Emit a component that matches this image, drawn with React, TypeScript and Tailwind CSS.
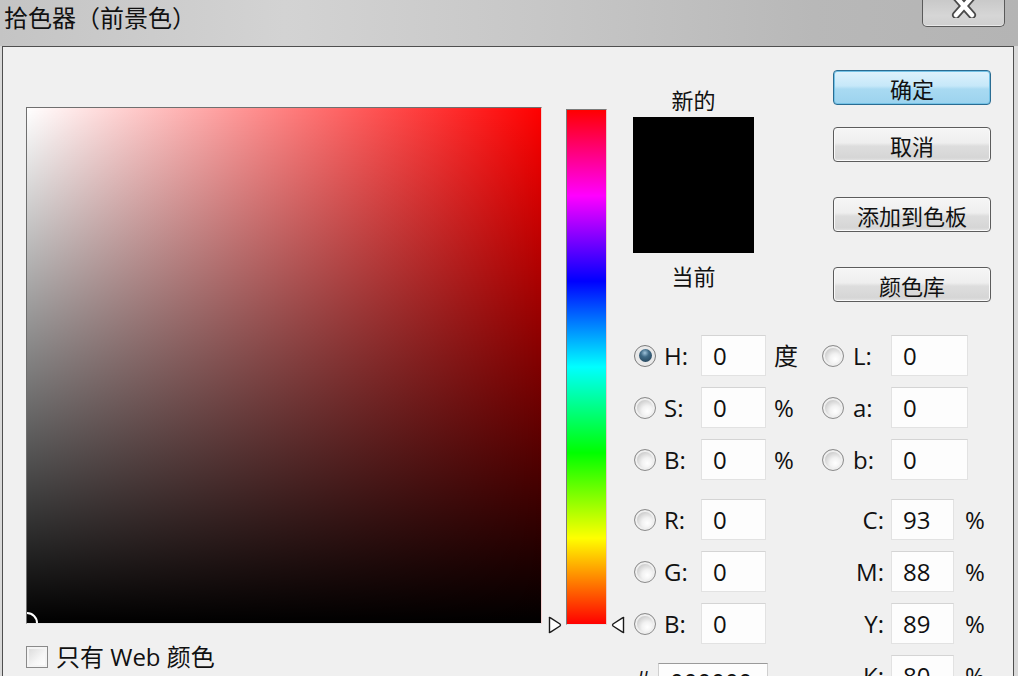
import React from "react";

const radioOff =
  "w-[22px] h-[22px] rounded-full border border-[#8c8c8c] bg-[radial-gradient(circle_at_62%_66%,#ffffff_0%,#f2f2f2_30%,#d2d2d2_60%,#b6b6b6_100%)] shadow-[inset_0_0_0_2px_#efefef] shrink-0";

function Radio({ on }: { on?: boolean }) {
  if (on) {
    return (
      <div className="w-[22px] h-[22px] rounded-full border border-[#7c7c7c] bg-[#e9e9e9] flex items-center justify-center shrink-0">
        <div className="w-[13px] h-[13px] rounded-full bg-[radial-gradient(circle_at_45%_30%,#9fc3da_0%,#3f6a86_35%,#1e3b50_100%)]" />
      </div>
    );
  }
  return <div className={radioOff} />;
}

function Field({ value, w }: { value: string; w: string }) {
  return (
    <div
      className={`${w} h-[41px] bg-[#fdfdfd] border border-[#e2e2e2] border-t-[#d4d4d4] flex items-center pl-[11px] text-[24px] leading-none text-[#111]`}
    >
      {value}
    </div>
  );
}

function LeftRow({ label, value, unit, mt, on }: { label: string; value: string; unit?: string; mt: string; on?: boolean }) {
  return (
    <div className={`flex items-center h-[41px] ${mt}`}>
      <div className="ml-[1px]">
        <Radio on={on} />
      </div>
      <span className="ml-[8px] w-[37px] text-[24px] leading-none text-[#111]">{label}</span>
      <Field value={value} w="w-[65px]" />
      {unit && <span className="ml-[8px] text-[24px] leading-none text-[#111]">{unit}</span>}
    </div>
  );
}

function LabRow({ label, value, mt }: { label: string; value: string; mt: string }) {
  return (
    <div className={`flex items-center h-[41px] ${mt}`}>
      <Radio />
      <span className="ml-[9px] w-[38px] text-[24px] leading-none text-[#111]">{label}</span>
      <Field value={value} w="w-[77px]" />
    </div>
  );
}

function CmykRow({ label, value, mt }: { label: string; value: string; mt: string }) {
  return (
    <div className={`flex items-center h-[41px] ${mt}`}>
      <span className="w-[62px] text-right text-[24px] leading-none text-[#111]">{label}</span>
      <div className="ml-[7px]">
        <Field value={value} w="w-[63px]" />
      </div>
      <span className="ml-[11px] text-[24px] leading-none text-[#111]">%</span>
    </div>
  );
}

function Btn({ children, primary, mt }: { children: React.ReactNode; primary?: boolean; mt: string }) {
  const cls = primary
    ? "border border-[#2a6c92] shadow-[inset_0_0_0_1px_#74c2e6] bg-[linear-gradient(#dff2fc_0%,#c6e8f9_45%,#a9daf2_55%,#9cd3ee_100%)]"
    : "border border-[#5c5c5c] shadow-[inset_0_0_0_1px_#fafafa] bg-[linear-gradient(#f6f6f6_0%,#eeeeee_45%,#dddddd_55%,#d6d6d6_90%,#e4e4e4_100%)]";
  return (
    <div
      className={`${mt} w-[158px] h-[35px] rounded-[4px] ${cls} flex items-center justify-center text-[22px] leading-none text-[#111]`}
    >
      {children}
    </div>
  );
}

function Tri({ dir }: { dir: "right" | "left" }) {
  return (
    <svg width="16" height="20" viewBox="0 0 16 20">
      {dir === "right" ? (
        <path d="M2.5 3 Q2 2 3.5 2.8 L13 9 Q14 10 13 11 L3.5 17.2 Q2 18 2.5 17 Z" fill="#fff" stroke="#1a1a1a" strokeWidth="1.4" strokeLinejoin="round" />
      ) : (
        <path d="M13.5 3 Q14 2 12.5 2.8 L3 9 Q2 10 3 11 L12.5 17.2 Q14 18 13.5 17 Z" fill="#fff" stroke="#1a1a1a" strokeWidth="1.4" strokeLinejoin="round" />
      )}
    </svg>
  );
}

export default function App() {
  return (
    <div className="w-[1018px] h-[676px] overflow-hidden bg-[#d9d9d9] font-['Open_Sans','Noto_Sans_CJK_SC',sans-serif] text-[#111]">
      {/* Title bar */}
      <div className="h-[46px] flex items-start bg-[linear-gradient(to_right,#c4c4c4,#d3d3d3_28%,#c6c6c6_55%,#b8b8b8_80%,#b4b4b4)]">
        <div className="pl-[4px] pt-[2px] text-[24px] leading-[30px] text-[#111] font-['Noto_Sans_CJK_SC',sans-serif]">
          拾色器（前景色）
        </div>
        <div className="ml-auto mr-[13px] w-[83px] h-[27px] border border-t-0 border-[#5a5a5a] rounded-b-[5px] bg-[linear-gradient(#c9c9c9,#d6d6d6_60%,#cfcfcf)] shadow-[inset_0_-1px_0_#e8e8e8] flex justify-center">
          <svg width="30" height="21" viewBox="0 0 30 21" className="-mt-[3px]">
            <path d="M7 0 L23 18 M23 0 L7 18" stroke="#4a4a4a" strokeWidth="8" strokeLinecap="round" />
            <path d="M7 0 L23 18 M23 0 L7 18" stroke="#ffffff" strokeWidth="4.5" strokeLinecap="round" />
          </svg>
        </div>
      </div>

      {/* Body */}
      <div className="ml-[2px] mr-[4px] h-[630px] bg-[#f0f0f0] border-t border-l border-r border-[#4f4f4f] flex items-start">
        {/* Color field column */}
        <div className="ml-[23px] mt-[60px] flex flex-col">
          <div className="relative w-[516px] h-[517px] overflow-hidden border border-t-[#6f6f6f] border-l-[#6f6f6f] border-r-[#f3d0d0] border-b-[#e6e6e6] bg-[linear-gradient(to_bottom,rgba(0,0,0,0),#000),linear-gradient(to_right,#ffffff,#ff0000)]">
            <div className="absolute -left-[11px] -bottom-[11px] w-[22px] h-[22px] rounded-full border-2 border-white" />
          </div>
          <div className="mt-[21px] flex items-center">
            <div className="w-[22px] h-[22px] border border-[#8a8a8a] bg-[linear-gradient(135deg,#d8d8d8,#f6f6f6_60%,#ffffff)] shadow-[inset_0_0_0_2px_#f4f4f4]" />
            <span className="ml-[8px] text-[24px] leading-none">只有 Web 颜色</span>
          </div>
        </div>

        {/* Hue bar */}
        <div className="relative ml-[24px] mt-[62px] w-[41px] h-[516px] border border-t-[#7a7a7a] border-l-[#7a7a7a] border-r-[#e8c8c8] border-b-[#e6e6e6] bg-[linear-gradient(to_bottom,#ff0000,#ff00ff_16.7%,#0000ff_33.3%,#00ffff_50%,#00ff00_66.7%,#ffff00_83.3%,#ff0000)]">
          <div className="absolute -left-[20px] -bottom-[11px]">
            <Tri dir="right" />
          </div>
          <div className="absolute -right-[20px] -bottom-[11px]">
            <Tri dir="left" />
          </div>
        </div>

        {/* Right area */}
        <div className="ml-[26px] flex flex-col">
          <div className="flex items-start">
            <div className="w-[121px] mt-[39px] flex flex-col items-center">
              <span className="text-[22px] leading-[26px] font-['Noto_Sans_CJK_SC',sans-serif]">新的</span>
              <div className="mt-[5px] w-[121px] h-[136px] bg-black" />
              <span className="mt-[9px] text-[22px] leading-[26px] font-['Noto_Sans_CJK_SC',sans-serif]">当前</span>
            </div>
            <div className="ml-[79px] flex flex-col font-['Noto_Sans_CJK_SC',sans-serif]">
              <Btn primary mt="mt-[23px]">确定</Btn>
              <Btn mt="mt-[22px]">取消</Btn>
              <Btn mt="mt-[35px]">添加到色板</Btn>
              <Btn mt="mt-[35px]">颜色库</Btn>
            </div>
          </div>

          <div className="mt-[33px] flex items-start">
            <div className="w-[189px] flex flex-col">
              <LeftRow label="H:" value="0" unit="度" mt="mt-0" on />
              <LeftRow label="S:" value="0" unit="%" mt="mt-[11px]" />
              <LeftRow label="B:" value="0" unit="%" mt="mt-[11px]" />
              <LeftRow label="R:" value="0" mt="mt-[19px]" />
              <LeftRow label="G:" value="0" mt="mt-[11px]" />
              <LeftRow label="B:" value="0" mt="mt-[11px]" />
              <div className="mt-[19px] flex items-start h-[41px]">
                <span className="ml-[2px] w-[23px] text-[24px] leading-[24px] pt-[4px]">#</span>
                <div className="w-[110px] h-[41px] bg-[#fdfdfd] border border-[#cfcfcf] border-t-[#9a9a9a] flex items-start pt-[6px] pl-[11px] text-[24px] leading-none">
                  000000
                </div>
              </div>
            </div>
            <div className="flex flex-col">
              <LabRow label="L:" value="0" mt="mt-0" />
              <LabRow label="a:" value="0" mt="mt-[11px]" />
              <LabRow label="b:" value="0" mt="mt-[11px]" />
              <CmykRow label="C:" value="93" mt="mt-[19px]" />
              <CmykRow label="M:" value="88" mt="mt-[11px]" />
              <CmykRow label="Y:" value="89" mt="mt-[11px]" />
              <CmykRow label="K:" value="80" mt="mt-[11px]" />
            </div>
          </div>
        </div>
      </div>
    </div>
  );
}
